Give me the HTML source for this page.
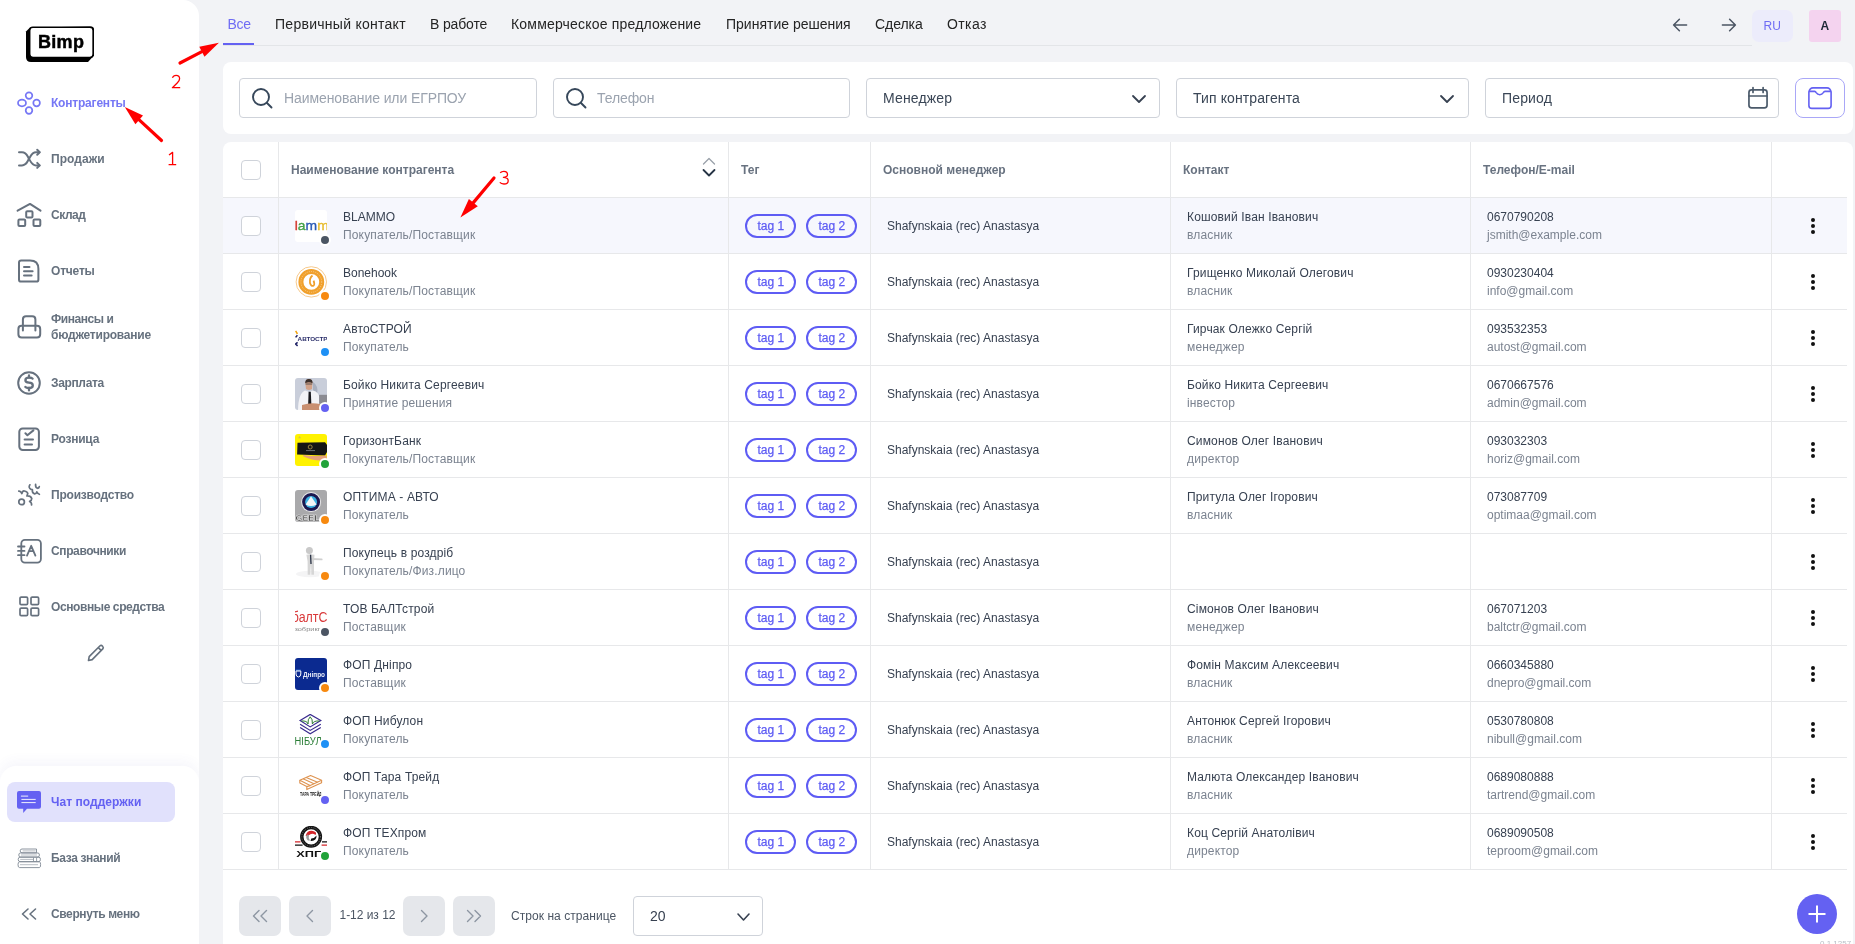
<!DOCTYPE html><html><head><meta charset="utf-8"><title>Bimp</title><style>
*{box-sizing:border-box;margin:0;padding:0}
html,body{width:1855px;height:944px;overflow:hidden}
body{background:#f2f3f6;font-family:"Liberation Sans",sans-serif;position:relative;-webkit-font-smoothing:antialiased}
.t{position:absolute;white-space:nowrap;line-height:1}
.a{position:absolute}
svg{position:absolute;overflow:visible}
</style></head><body><div class="a" style="left:0;top:0;width:1855px;height:944px;overflow:hidden;will-change:transform">
<div class="a" style="left:0;top:0;width:199px;height:944px;background:#fff;border-top-right-radius:16px"></div>
<svg style="left:26px;top:26px" width="68" height="36" viewBox="0 0 68 36">
<path d="M4 1.5 L65 0.6 Q68 0.6 68 3.6 L68 29.6 L62 36 L5 36 Q0 36 0 31 L0 5.5 Z" fill="#000"/>
<rect x="3.7" y="1.3" width="63.4" height="30.2" rx="3.2" fill="#fff" stroke="#000" stroke-width="1.5"/>
</svg>
<div class="t" style="left:38px;top:32.76px;font-size:18px;font-weight:700;color:#000;letter-spacing:0.3px;-webkit-text-stroke:0.45px #000">Bimp</div>
<svg style="left:17px;top:91px" width="24" height="24" viewBox="0 0 24 24" fill="none" stroke="#7677f5" stroke-width="1.7" stroke-linecap="round" stroke-linejoin="round"><circle cx="12" cy="4.6" r="3.3"/><ellipse cx="5" cy="12" rx="4" ry="3.3"/><circle cx="19.6" cy="12" r="3.3"/><circle cx="12" cy="19.5" r="3.3"/></svg>
<div class="t" style="left:51px;top:97.14px;font-size:12px;font-weight:700;color:#7677f5;letter-spacing:-0.2px">Контрагенты</div>
<svg style="left:17px;top:147px" width="24" height="24" viewBox="0 0 24 24" fill="none" stroke="#66717e" stroke-width="2" stroke-linecap="round" stroke-linejoin="round"><path d="M2 5.3 H5 C9.5 5.3 10 8.5 12 11.8 C14 15.2 15 18.4 19 18.4 H22.5"/><path d="M2 18.4 H5 C9.5 18.4 10 15.2 12 11.8 C14 8.5 15 5.3 19 5.3 H22.5"/><path d="M20.2 2.8 L22.7 5.3 L20.2 7.8"/><path d="M20.2 15.9 L22.7 18.4 L20.2 20.9"/></svg>
<div class="t" style="left:51px;top:153.14px;font-size:12px;font-weight:700;color:#66717e;letter-spacing:0.05px">Продажи</div>
<svg style="left:17px;top:203px" width="24" height="24" viewBox="0 0 24 24" fill="none" stroke="#66717e" stroke-width="2" stroke-linecap="round" stroke-linejoin="round"><path d="M0.6 7.7 L13 0.9 L23.5 7.7"/><rect x="9.2" y="8.2" width="6.3" height="6.4" rx="1"/><rect x="1.4" y="16.4" width="6.8" height="6.6" rx="1"/><rect x="16.5" y="16.4" width="6.8" height="6.6" rx="1"/></svg>
<div class="t" style="left:51px;top:209.14px;font-size:12px;font-weight:700;color:#66717e;letter-spacing:-0.45px">Склад</div>
<svg style="left:17px;top:259px" width="24" height="24" viewBox="0 0 24 24" fill="none" stroke="#66717e" stroke-width="2" stroke-linecap="round" stroke-linejoin="round"><path d="M2 3.5 Q2 1.4 4.2 1.4 H13 Q21.4 1.4 21.4 9.8 V20.4 Q21.4 22.6 19.3 22.6 H4.2 Q2 22.6 2 20.4 Z"/><path d="M7 7.9 H12.5"/><path d="M7 12.3 H15.6"/><path d="M7 16.6 H14.6"/></svg>
<div class="t" style="left:51px;top:265.14px;font-size:12px;font-weight:700;color:#66717e;letter-spacing:-0.2px">Отчеты</div>
<svg style="left:17px;top:315px" width="24" height="24" viewBox="0 0 24 24" fill="none" stroke="#66717e" stroke-width="2" stroke-linecap="round" stroke-linejoin="round"><path d="M1.4 14 Q1.4 10.8 4.6 10.8 H20 Q23.2 10.8 23.2 14 V19.2 Q23.2 22.4 20 22.4 H4.6 Q1.4 22.4 1.4 19.2 Z"/><path d="M5.9 15.6 V4.4 Q5.9 1.3 9 1.3 H15.2 Q18.4 1.3 18.4 4.4 V15.6"/></svg>
<div class="t" style="left:51px;top:313.34px;font-size:12px;font-weight:700;color:#66717e;letter-spacing:-0.45px">Финансы и</div>
<div class="t" style="left:51px;top:328.84px;font-size:12px;font-weight:700;color:#66717e;letter-spacing:-0.23px">бюджетирование</div>
<svg style="left:17px;top:371px" width="24" height="24" viewBox="0 0 24 24" fill="none" stroke="#66717e" stroke-width="2" stroke-linecap="round" stroke-linejoin="round"><circle cx="12" cy="12" r="10.8"/><path d="M15.6 7.6 Q14.8 6.6 12 6.6 Q8.4 6.6 8.4 9.2 Q8.4 11.4 12 11.6 Q15.8 11.8 15.8 14.4 Q15.8 17 12 17 Q9.2 17 8.4 16" stroke-width="2.3"/><path d="M12 4.4 V6.6 M12 17 V19.4" stroke-width="2.3"/></svg>
<div class="t" style="left:51px;top:377.14px;font-size:12px;font-weight:700;color:#66717e;letter-spacing:-0.35px">Зарплата</div>
<svg style="left:17px;top:427px" width="24" height="24" viewBox="0 0 24 24" fill="none" stroke="#66717e" stroke-width="2" stroke-linecap="round" stroke-linejoin="round"><rect x="2.3" y="1.4" width="19.6" height="21.6" rx="3.4"/><path d="M8.4 6.3 L10.4 8.2 L16.4 3.4"/><path d="M7.6 12.6 H16"/><path d="M7.6 17.5 H15"/></svg>
<div class="t" style="left:51px;top:433.14px;font-size:12px;font-weight:700;color:#66717e;letter-spacing:-0.22px">Розница</div>
<svg style="left:17px;top:483px" width="24" height="24" viewBox="0 0 24 24" fill="none" stroke="#66717e" stroke-width="2" stroke-linecap="round" stroke-linejoin="round"><circle cx="4.6" cy="18.9" r="2.8" stroke-width="1.7"/><path d="M1.8 8.1 Q3.6 7.8 4.9 10.6 Q5.6 7.6 7.4 8 Q10.6 8.8 10.8 10.6 Q9.8 12.6 9.9 13 Q13.6 12.6 14.8 15.6 Q14.8 17.6 12.6 18.4 Q14.8 19.4 14.6 22" stroke-width="1.7"/><path d="M12.9 1.8 Q10.9 4.6 14.2 6.5 L15.4 6.6 Q14.8 9.4 17.3 10.8 Q19.4 11 19.8 8.8 Q20.6 10.8 22.4 11.3" stroke-width="1.7"/><path d="M18.6 1.4 Q18.2 4.6 20.6 5.3 Q22.1 5.2 22.3 3.7" stroke-width="1.7"/></svg>
<div class="t" style="left:51px;top:489.14px;font-size:12px;font-weight:700;color:#66717e;letter-spacing:-0.22px">Производство</div>
<svg style="left:17px;top:539px" width="24" height="24" viewBox="0 0 24 24" fill="none" stroke="#66717e" stroke-width="2" stroke-linecap="round" stroke-linejoin="round"><rect x="4.3" y="0.9" width="19.6" height="22.7" rx="3.6" stroke-width="1.8"/><path d="M1 7.5 H7.5 M1 11.9 H7.5 M1 16.2 H7.5" stroke-width="1.8"/><path d="M10 16.6 L14.2 6.8 L18.4 16.6 M11.8 12.1 H16.6" stroke-width="1.8"/></svg>
<div class="t" style="left:51px;top:545.14px;font-size:12px;font-weight:700;color:#66717e;letter-spacing:-0.38px">Справочники</div>
<svg style="left:17px;top:595px" width="24" height="24" viewBox="0 0 24 24" fill="none" stroke="#66717e" stroke-width="2" stroke-linecap="round" stroke-linejoin="round"><rect x="3" y="2.1" width="7.6" height="7.6" rx="1.2" stroke-width="1.7"/><rect x="14" y="2.1" width="7.6" height="7.6" rx="1.2" stroke-width="1.7"/><rect x="3" y="13.1" width="7.6" height="7.6" rx="1.2" stroke-width="1.7"/><rect x="14" y="13.1" width="7.6" height="7.6" rx="1.2" stroke-width="1.7"/></svg>
<div class="t" style="left:51px;top:601.14px;font-size:12px;font-weight:700;color:#66717e;letter-spacing:-0.4px">Основные средства</div>
<svg style="left:87px;top:644px" width="18" height="18" viewBox="0 0 18 18" fill="none" stroke="#66717e" stroke-width="1.6" stroke-linejoin="round"><path d="M1.5 16.5 L2.2 12.6 L12.8 2 Q14.2 0.8 15.6 2.2 Q16.9 3.6 15.8 4.9 L5.2 15.6 Z"/><path d="M11.3 3.6 L14.3 6.6"/></svg>
<div class="a" style="left:0;top:700px;width:199px;height:244px;overflow:hidden"><div class="a" style="left:0;top:66px;width:199px;height:200px;background:#fff;border-radius:16px 16px 0 0;box-shadow:0 -5px 12px rgba(80,80,170,0.05)"></div></div>
<div class="a" style="left:7px;top:782px;width:168px;height:40px;background:#e1e1fc;border-radius:8px"></div>
<svg style="left:17px;top:790px" width="24" height="23" viewBox="0 0 24 23"><path d="M2 1 H22 Q24 1 24 3 V16.7 Q24 18.7 22 18.7 H10 L6.2 22.9 V18.7 H2 Q0 18.7 0 16.7 V3 Q0 1 2 1 Z" fill="#6461f2"/><path d="M4.3 6.1 H10.8 M4.8 9.4 H18.3 M4.8 12.6 H18.3" stroke="#fff" stroke-width="1" stroke-linecap="round" opacity="0.9"/></svg>
<div class="t" style="left:51px;top:795.84px;font-size:12px;font-weight:700;color:#6461f2;letter-spacing:0.05px">Чат поддержки</div>
<svg style="left:17px;top:848px" width="24" height="21" viewBox="0 0 24 21" fill="none" stroke="#7f8994" stroke-width="0.9" stroke-linejoin="round"><path d="M5 1 H19.5 V4.8 H5 Q3.2 4.8 3.2 2.9 Q3.2 1 5 1 Z"/><path d="M3.4 5 H21 Q22.4 5 22.4 7 Q22.4 9 21 9 H3.4 Q1.8 9 1.8 7 Q1.8 5 3.4 5 Z"/><path d="M3 9.2 H22 Q23.4 9.2 23.4 11.4 Q23.4 13.6 22 13.6 H3 Q1.2 13.6 1.2 11.4 Q1.2 9.2 3 9.2 Z"/><path d="M2.6 13.8 H22.4 Q23.6 13.8 23.6 16.6 Q23.6 19.6 22.4 19.6 H2.6 Q1 19.6 1 16.7 Q1 13.8 2.6 13.8 Z"/><path d="M5.6 2.9 H18.6 M4 7 H20 M3.2 11.4 H16 M3 16.7 H21" stroke-width="0.7" opacity="0.8"/><path d="M16.5 9.6 V13.2 M19.6 9.6 V13.2" stroke-width="0.8"/></svg>
<div class="t" style="left:51px;top:851.84px;font-size:12px;font-weight:700;color:#66717e;letter-spacing:-0.35px">База знаний</div>
<svg style="left:21px;top:908px" width="16" height="12" viewBox="0 0 16 12" fill="none" stroke="#66717e" stroke-width="1.6" stroke-linecap="round" stroke-linejoin="round"><path d="M7 1 L1.5 6 L7 11"/><path d="M14.5 1 L9 6 L14.5 11"/></svg>
<div class="t" style="left:51px;top:907.84px;font-size:12px;font-weight:700;color:#66717e;letter-spacing:-0.38px">Свернуть меню</div>
<div class="a" style="left:223px;top:45px;width:1529px;height:1px;background:#e3e5e8"></div>
<div class="a" style="left:223px;top:43px;width:31px;height:2px;background:#6461f2"></div>
<div class="t" style="left:227.5px;top:17.45px;font-size:14px;font-weight:400;color:#6f6cf4;letter-spacing:-0.25px">Все</div>
<div class="t" style="left:275px;top:17.45px;font-size:14px;font-weight:400;color:#242424;letter-spacing:0.27px">Первичный контакт</div>
<div class="t" style="left:430px;top:17.45px;font-size:14px;font-weight:400;color:#242424;letter-spacing:-0.15px">В работе</div>
<div class="t" style="left:511px;top:17.45px;font-size:14px;font-weight:400;color:#242424;letter-spacing:0.19px">Коммерческое предложение</div>
<div class="t" style="left:726px;top:17.45px;font-size:14px;font-weight:400;color:#242424;letter-spacing:0.0px">Принятие решения</div>
<div class="t" style="left:875px;top:17.45px;font-size:14px;font-weight:400;color:#242424;letter-spacing:-0.05px">Сделка</div>
<div class="t" style="left:947px;top:17.45px;font-size:14px;font-weight:400;color:#242424;letter-spacing:0.4px">Отказ</div>
<svg style="left:1672px;top:18px" width="16" height="14" viewBox="0 0 16 14" fill="none" stroke="#4b5563" stroke-width="1.5" stroke-linecap="round" stroke-linejoin="round"><path d="M14.6 7 H1.6 M7.4 1.3 L1.6 7 L7.4 12.7"/></svg>
<svg style="left:1721px;top:18px" width="16" height="14" viewBox="0 0 16 14" fill="none" stroke="#4b5563" stroke-width="1.5" stroke-linecap="round" stroke-linejoin="round"><path d="M1.4 7 H14.4 M8.6 1.3 L14.4 7 L8.6 12.7"/></svg>
<div class="a" style="left:1752px;top:10px;width:41px;height:32px;background:#ececfb;border-radius:7px"></div>
<div class="t" style="left:1763.5px;top:20.34px;font-size:12px;font-weight:400;color:#6f6cf4;">RU</div>
<div class="a" style="left:1809px;top:10px;width:32px;height:32px;background:#f4d3ef;border-radius:3px"></div>
<div class="t" style="left:1820.5px;top:20.34px;font-size:12px;font-weight:700;color:#1f2937;">A</div>
<div class="a" style="left:223px;top:62px;width:1630px;height:72px;background:#fff;border-radius:8px"></div>
<div class="a" style="left:239px;top:78px;width:298px;height:40px;border:1px solid #cfd3da;border-radius:4px"></div>
<div class="a" style="left:553px;top:78px;width:297px;height:40px;border:1px solid #cfd3da;border-radius:4px"></div>
<div class="a" style="left:866px;top:78px;width:294px;height:40px;border:1px solid #cfd3da;border-radius:4px"></div>
<div class="a" style="left:1176px;top:78px;width:293px;height:40px;border:1px solid #cfd3da;border-radius:4px"></div>
<div class="a" style="left:1485px;top:78px;width:294px;height:40px;border:1px solid #cfd3da;border-radius:4px"></div>
<svg style="left:252px;top:88px" width="22" height="22" viewBox="0 0 22 22" fill="none" stroke="#36475a" stroke-width="1.9" stroke-linecap="round"><circle cx="9" cy="9" r="8"/><path d="M15 15 L19.5 19.5"/></svg>
<svg style="left:566px;top:88px" width="22" height="22" viewBox="0 0 22 22" fill="none" stroke="#36475a" stroke-width="1.9" stroke-linecap="round"><circle cx="9" cy="9" r="8"/><path d="M15 15 L19.5 19.5"/></svg>
<div class="t" style="left:284px;top:90.75px;font-size:14px;font-weight:400;color:#9ba3af;letter-spacing:-0.1px">Наименование или ЕГРПОУ</div>
<div class="t" style="left:597px;top:90.75px;font-size:14px;font-weight:400;color:#9ba3af;letter-spacing:-0.1px">Телефон</div>
<div class="t" style="left:883px;top:90.75px;font-size:14px;font-weight:400;color:#3a4656;;letter-spacing:0.15px">Менеджер</div>
<div class="t" style="left:1193px;top:90.75px;font-size:14px;font-weight:400;color:#3a4656;letter-spacing:0.1px">Тип контрагента</div>
<div class="t" style="left:1502px;top:90.75px;font-size:14px;font-weight:400;color:#3a4656;;letter-spacing:0.15px">Период</div>
<svg style="left:1132px;top:95px" width="14" height="8" viewBox="0 0 14 8" fill="none" stroke="#374151" stroke-width="1.8" stroke-linecap="round" stroke-linejoin="round"><path d="M1 1 L7.0 7 L13 1"/></svg>
<svg style="left:1440px;top:95px" width="14" height="8" viewBox="0 0 14 8" fill="none" stroke="#374151" stroke-width="1.8" stroke-linecap="round" stroke-linejoin="round"><path d="M1 1 L7.0 7 L13 1"/></svg>
<svg style="left:1748px;top:87px" width="20" height="22" viewBox="0 0 20 22" fill="none" stroke="#4b5a6a" stroke-width="1.7" stroke-linecap="round"><rect x="0.95" y="2.95" width="18.1" height="17.9" rx="2.6"/><path d="M0.95 9 H19 M5 0.6 V5.4 M15.1 0.6 V5.4"/></svg>
<div class="a" style="left:1795px;top:78px;width:50px;height:40px;border:1px solid #a9a7f7;border-radius:8px"></div>
<svg style="left:1808px;top:87px" width="24" height="22" viewBox="0 0 24 22" fill="none" stroke="#6461f2" stroke-width="1.6" stroke-linejoin="round"><path d="M0.9 5 Q1.8 0.9 5 0.9 H19 Q22.2 0.9 23.1 5 V18.4 Q23.1 21.4 20.1 21.4 H3.9 Q0.9 21.4 0.9 18.4 Z"/><path d="M0.9 4.4 H6.6 Q7.6 4.4 8.2 5.6 Q9.5 7.7 11.8 7.7 Q14 7.7 15.3 5.6 Q16 4.4 17 4.4 H23.1"/></svg>
<div class="a" style="left:223px;top:142px;width:1630px;height:810px;background:#fff;border-radius:8px"></div>
<div class="a" style="left:223px;top:198px;width:1624px;height:55px;background:#f6f7fd"></div>
<div class="a" style="left:223px;top:197px;width:1624px;height:1px;background:#e7e8ea"></div>
<div class="a" style="left:223px;top:253px;width:1624px;height:1px;background:#e7e8ea"></div>
<div class="a" style="left:223px;top:309px;width:1624px;height:1px;background:#e7e8ea"></div>
<div class="a" style="left:223px;top:365px;width:1624px;height:1px;background:#e7e8ea"></div>
<div class="a" style="left:223px;top:421px;width:1624px;height:1px;background:#e7e8ea"></div>
<div class="a" style="left:223px;top:477px;width:1624px;height:1px;background:#e7e8ea"></div>
<div class="a" style="left:223px;top:533px;width:1624px;height:1px;background:#e7e8ea"></div>
<div class="a" style="left:223px;top:589px;width:1624px;height:1px;background:#e7e8ea"></div>
<div class="a" style="left:223px;top:645px;width:1624px;height:1px;background:#e7e8ea"></div>
<div class="a" style="left:223px;top:701px;width:1624px;height:1px;background:#e7e8ea"></div>
<div class="a" style="left:223px;top:757px;width:1624px;height:1px;background:#e7e8ea"></div>
<div class="a" style="left:223px;top:813px;width:1624px;height:1px;background:#e7e8ea"></div>
<div class="a" style="left:223px;top:869px;width:1624px;height:1px;background:#e7e8ea"></div>
<div class="a" style="left:278px;top:142px;width:1px;height:728px;background:#e7e8ea"></div>
<div class="a" style="left:728px;top:142px;width:1px;height:728px;background:#e7e8ea"></div>
<div class="a" style="left:870px;top:142px;width:1px;height:728px;background:#e7e8ea"></div>
<div class="a" style="left:1170px;top:142px;width:1px;height:728px;background:#e7e8ea"></div>
<div class="a" style="left:1470px;top:142px;width:1px;height:728px;background:#e7e8ea"></div>
<div class="a" style="left:1771px;top:142px;width:1px;height:728px;background:#e7e8ea"></div>
<div class="a" style="left:241px;top:160px;width:20px;height:20px;border:1px solid #cfd3da;border-radius:4px;background:#fff"></div>
<div class="t" style="left:291px;top:163.84px;font-size:12px;font-weight:700;color:#687280;">Наименование контрагента</div>
<div class="t" style="left:741px;top:163.84px;font-size:12px;font-weight:700;color:#687280;">Тег</div>
<div class="t" style="left:883px;top:163.84px;font-size:12px;font-weight:700;color:#687280;">Основной менеджер</div>
<div class="t" style="left:1183px;top:163.84px;font-size:12px;font-weight:700;color:#687280;">Контакт</div>
<div class="t" style="left:1483px;top:163.84px;font-size:12px;font-weight:700;color:#687280;">Телефон/E-mail</div>
<svg style="left:702px;top:157px" width="14" height="20" viewBox="0 0 14 20" fill="none" stroke-linecap="round" stroke-linejoin="round"><path d="M1.5 7 L7 1.5 L12.5 7" stroke="#9aa1aa" stroke-width="1.3"/><path d="M1.5 13 L7 18.5 L12.5 13" stroke="#263445" stroke-width="1.8"/></svg>
<div class="a" style="left:241px;top:216px;width:20px;height:20px;border:1px solid #cfd3da;border-radius:4px;background:#fff"></div>
<svg style="left:295px;top:210px" width="32" height="32" viewBox="0 0 32 32"><defs><clipPath id="cblammo"><rect width="32" height="32" rx="3"/></clipPath></defs><g clip-path="url(#cblammo)"><rect width="32" height="32" fill="#fff"/><text x="-0.2" y="20.2" font-family="Liberation Sans" font-size="13" font-weight="400" stroke-width="0.35" textLength="34" lengthAdjust="spacingAndGlyphs"><tspan fill="#d2392f" stroke="#d2392f">l</tspan><tspan fill="#43a047" stroke="#43a047">a</tspan><tspan fill="#2c5bb5" stroke="#2c5bb5">m</tspan><tspan fill="#e6bb2c" stroke="#e6bb2c">m</tspan></text></g></svg>
<div class="a" style="left:319px;top:234px;width:12px;height:12px;border-radius:50%;background:#4b5563;border:2px solid #fff"></div>
<div class="t" style="left:343px;top:210.84px;font-size:12px;font-weight:400;color:#374151;">BLAMMO</div>
<div class="t" style="left:343px;top:228.84px;font-size:12px;font-weight:400;color:#7b8390;;letter-spacing:0.15px">Покупатель/Поставщик</div>
<div class="a" style="left:745px;top:214px;width:51px;height:24px;border:2px solid #5e5cf4;border-radius:12px"></div>
<div class="t" style="left:757.5px;top:220.34px;font-size:12px;font-weight:400;color:#5e5cf4;-webkit-text-stroke:0.25px #5e5cf4">tag 1</div>
<div class="a" style="left:806px;top:214px;width:51px;height:24px;border:2px solid #5e5cf4;border-radius:12px"></div>
<div class="t" style="left:818.5px;top:220.34px;font-size:12px;font-weight:400;color:#5e5cf4;-webkit-text-stroke:0.25px #5e5cf4">tag 2</div>
<div class="t" style="left:887px;top:219.84px;font-size:12px;font-weight:400;color:#374151;">Shafynskaia (rec) Anastasya</div>
<div class="t" style="left:1187px;top:210.84px;font-size:12px;font-weight:400;color:#374151;;letter-spacing:0.15px">Кошовий Іван Іванович</div>
<div class="t" style="left:1187px;top:228.84px;font-size:12px;font-weight:400;color:#7b8390;;letter-spacing:0.15px">власник</div>
<div class="t" style="left:1487px;top:210.84px;font-size:12px;font-weight:400;color:#374151;">0670790208</div>
<div class="t" style="left:1487px;top:228.84px;font-size:12px;font-weight:400;color:#7b8390;">jsmith@example.com</div>
<div class="a" style="left:1811px;top:218px;width:4.4px;height:4.4px;border-radius:50%;background:#111"></div>
<div class="a" style="left:1811px;top:224px;width:4.4px;height:4.4px;border-radius:50%;background:#111"></div>
<div class="a" style="left:1811px;top:230px;width:4.4px;height:4.4px;border-radius:50%;background:#111"></div>
<div class="a" style="left:241px;top:272px;width:20px;height:20px;border:1px solid #cfd3da;border-radius:4px;background:#fff"></div>
<svg style="left:295px;top:266px" width="32" height="32" viewBox="0 0 32 32"><defs><clipPath id="cbone"><rect width="32" height="32" rx="3"/></clipPath></defs><g clip-path="url(#cbone)"><rect width="32" height="32" fill="#fff"/><circle cx="16.3" cy="15.9" r="15.2" fill="none" stroke="#f6c98c" stroke-width="1"/><circle cx="16.3" cy="15.9" r="10.4" fill="none" stroke="#f0a02c" stroke-width="5"/><circle cx="16.3" cy="15.9" r="10.4" fill="none" stroke="#fbe3bf" stroke-width="0.6" stroke-dasharray="1 1.2"/><path d="M17.5 9.5 Q14.3 12 15 17 Q16 20.5 18.6 19.6 Q20 18.5 18.6 14.6" stroke="#f0a02c" stroke-width="1.8" fill="none"/></g></svg>
<div class="a" style="left:319px;top:290px;width:12px;height:12px;border-radius:50%;background:#f7890f;border:2px solid #fff"></div>
<div class="t" style="left:343px;top:266.84px;font-size:12px;font-weight:400;color:#374151;">Bonehook</div>
<div class="t" style="left:343px;top:284.84px;font-size:12px;font-weight:400;color:#7b8390;;letter-spacing:0.15px">Покупатель/Поставщик</div>
<div class="a" style="left:745px;top:270px;width:51px;height:24px;border:2px solid #5e5cf4;border-radius:12px"></div>
<div class="t" style="left:757.5px;top:276.34px;font-size:12px;font-weight:400;color:#5e5cf4;-webkit-text-stroke:0.25px #5e5cf4">tag 1</div>
<div class="a" style="left:806px;top:270px;width:51px;height:24px;border:2px solid #5e5cf4;border-radius:12px"></div>
<div class="t" style="left:818.5px;top:276.34px;font-size:12px;font-weight:400;color:#5e5cf4;-webkit-text-stroke:0.25px #5e5cf4">tag 2</div>
<div class="t" style="left:887px;top:275.84px;font-size:12px;font-weight:400;color:#374151;">Shafynskaia (rec) Anastasya</div>
<div class="t" style="left:1187px;top:266.84px;font-size:12px;font-weight:400;color:#374151;;letter-spacing:0.15px">Грищенко Миколай Олегович</div>
<div class="t" style="left:1187px;top:284.84px;font-size:12px;font-weight:400;color:#7b8390;;letter-spacing:0.15px">власник</div>
<div class="t" style="left:1487px;top:266.84px;font-size:12px;font-weight:400;color:#374151;">0930230404</div>
<div class="t" style="left:1487px;top:284.84px;font-size:12px;font-weight:400;color:#7b8390;">info@gmail.com</div>
<div class="a" style="left:1811px;top:274px;width:4.4px;height:4.4px;border-radius:50%;background:#111"></div>
<div class="a" style="left:1811px;top:280px;width:4.4px;height:4.4px;border-radius:50%;background:#111"></div>
<div class="a" style="left:1811px;top:286px;width:4.4px;height:4.4px;border-radius:50%;background:#111"></div>
<div class="a" style="left:241px;top:328px;width:20px;height:20px;border:1px solid #cfd3da;border-radius:4px;background:#fff"></div>
<svg style="left:295px;top:322px" width="32" height="32" viewBox="0 0 32 32"><defs><clipPath id="cavto"><rect width="32" height="32" rx="3"/></clipPath></defs><g clip-path="url(#cavto)"><rect width="32" height="32" fill="#fff"/><path d="M0.6 8.8 L2.4 11.8" stroke="#f2a20a" stroke-width="1.6"/><path d="M2.4 13.2 L0.6 15.4" stroke="#1f2266" stroke-width="1.5"/><path d="M2.6 20.4 L0.6 22 L2.6 23.8" stroke="#1f2266" stroke-width="1.6" fill="none"/><text x="2.6" y="18.9" font-family="Liberation Sans" font-size="6" font-weight="700" fill="#2a2e6a" textLength="30" lengthAdjust="spacingAndGlyphs">АВТОСТР</text></g></svg>
<div class="a" style="left:319px;top:346px;width:12px;height:12px;border-radius:50%;background:#1e90f5;border:2px solid #fff"></div>
<div class="t" style="left:343px;top:322.84px;font-size:12px;font-weight:400;color:#374151;;letter-spacing:0.15px">АвтоСТРОЙ</div>
<div class="t" style="left:343px;top:340.84px;font-size:12px;font-weight:400;color:#7b8390;;letter-spacing:0.15px">Покупатель</div>
<div class="a" style="left:745px;top:326px;width:51px;height:24px;border:2px solid #5e5cf4;border-radius:12px"></div>
<div class="t" style="left:757.5px;top:332.34px;font-size:12px;font-weight:400;color:#5e5cf4;-webkit-text-stroke:0.25px #5e5cf4">tag 1</div>
<div class="a" style="left:806px;top:326px;width:51px;height:24px;border:2px solid #5e5cf4;border-radius:12px"></div>
<div class="t" style="left:818.5px;top:332.34px;font-size:12px;font-weight:400;color:#5e5cf4;-webkit-text-stroke:0.25px #5e5cf4">tag 2</div>
<div class="t" style="left:887px;top:331.84px;font-size:12px;font-weight:400;color:#374151;">Shafynskaia (rec) Anastasya</div>
<div class="t" style="left:1187px;top:322.84px;font-size:12px;font-weight:400;color:#374151;;letter-spacing:0.15px">Гирчак Олежко Сергій</div>
<div class="t" style="left:1187px;top:340.84px;font-size:12px;font-weight:400;color:#7b8390;;letter-spacing:0.15px">менеджер</div>
<div class="t" style="left:1487px;top:322.84px;font-size:12px;font-weight:400;color:#374151;">093532353</div>
<div class="t" style="left:1487px;top:340.84px;font-size:12px;font-weight:400;color:#7b8390;">autost@gmail.com</div>
<div class="a" style="left:1811px;top:330px;width:4.4px;height:4.4px;border-radius:50%;background:#111"></div>
<div class="a" style="left:1811px;top:336px;width:4.4px;height:4.4px;border-radius:50%;background:#111"></div>
<div class="a" style="left:1811px;top:342px;width:4.4px;height:4.4px;border-radius:50%;background:#111"></div>
<div class="a" style="left:241px;top:384px;width:20px;height:20px;border:1px solid #cfd3da;border-radius:4px;background:#fff"></div>
<svg style="left:295px;top:378px" width="32" height="32" viewBox="0 0 32 32"><defs><clipPath id="cphoto"><rect width="32" height="32" rx="3"/></clipPath></defs><g clip-path="url(#cphoto)"><rect width="32" height="32" fill="#c9ceda"/><path d="M18 4 Q24 8 22 16 L18 16 Z" fill="#a9b0bf"/><path d="M10.4 5.6 Q10.6 1 14 1 Q17.6 1 17.4 5.6 L17 11 Q14 13 11 11 Z" fill="#d3a38a"/><path d="M10.2 5.2 Q10 0.8 14 0.9 Q17.8 0.9 17.6 5.2 Q14 3.2 10.2 5.2 Z" fill="#3b2f2a"/><path d="M10.6 6 H17.2" stroke="#444" stroke-width="0.8"/><path d="M3 32 Q3.4 15 10 12.4 L14 14 L18 12.4 Q24 14 24.5 20 L24.5 32 Z" fill="#f3f3f6"/><path d="M13.6 13.8 H15.8 L16.6 31.6 H13 Z" fill="#1a1a1e"/><rect x="24.1" y="16.8" width="7.9" height="9" fill="#8b8b92"/><path d="M7 27 Q16 24 25 26 L25 32 L7 32 Z" fill="#c98f70"/></g></svg>
<div class="a" style="left:319px;top:402px;width:12px;height:12px;border-radius:50%;background:#6461f2;border:2px solid #fff"></div>
<div class="t" style="left:343px;top:378.84px;font-size:12px;font-weight:400;color:#374151;;letter-spacing:0.15px">Бойко Никита Сергеевич</div>
<div class="t" style="left:343px;top:396.84px;font-size:12px;font-weight:400;color:#7b8390;;letter-spacing:0.15px">Принятие решения</div>
<div class="a" style="left:745px;top:382px;width:51px;height:24px;border:2px solid #5e5cf4;border-radius:12px"></div>
<div class="t" style="left:757.5px;top:388.34px;font-size:12px;font-weight:400;color:#5e5cf4;-webkit-text-stroke:0.25px #5e5cf4">tag 1</div>
<div class="a" style="left:806px;top:382px;width:51px;height:24px;border:2px solid #5e5cf4;border-radius:12px"></div>
<div class="t" style="left:818.5px;top:388.34px;font-size:12px;font-weight:400;color:#5e5cf4;-webkit-text-stroke:0.25px #5e5cf4">tag 2</div>
<div class="t" style="left:887px;top:387.84px;font-size:12px;font-weight:400;color:#374151;">Shafynskaia (rec) Anastasya</div>
<div class="t" style="left:1187px;top:378.84px;font-size:12px;font-weight:400;color:#374151;;letter-spacing:0.15px">Бойко Никита Сергеевич</div>
<div class="t" style="left:1187px;top:396.84px;font-size:12px;font-weight:400;color:#7b8390;;letter-spacing:0.15px">інвестор</div>
<div class="t" style="left:1487px;top:378.84px;font-size:12px;font-weight:400;color:#374151;">0670667576</div>
<div class="t" style="left:1487px;top:396.84px;font-size:12px;font-weight:400;color:#7b8390;">admin@gmail.com</div>
<div class="a" style="left:1811px;top:386px;width:4.4px;height:4.4px;border-radius:50%;background:#111"></div>
<div class="a" style="left:1811px;top:392px;width:4.4px;height:4.4px;border-radius:50%;background:#111"></div>
<div class="a" style="left:1811px;top:398px;width:4.4px;height:4.4px;border-radius:50%;background:#111"></div>
<div class="a" style="left:241px;top:440px;width:20px;height:20px;border:1px solid #cfd3da;border-radius:4px;background:#fff"></div>
<svg style="left:295px;top:434px" width="32" height="32" viewBox="0 0 32 32"><defs><clipPath id="cbank"><rect width="32" height="32" rx="3"/></clipPath></defs><g clip-path="url(#cbank)"><rect width="32" height="32" fill="#fff200"/><path d="M2.5 8.7 L30 8.3 L32 10.8 V18 L30 21.4 L2.1 20.6 Z" fill="#151515"/><path d="M6 8.5 Q8 7.4 10 8.5" fill="#c2655a"/><circle cx="15.2" cy="13" r="2" fill="none" stroke="#b89a4a" stroke-width="0.8"/><path d="M11 16.6 H20" stroke="#aaa" stroke-width="0.6"/><path d="M8 21 Q18 22.5 31.7 21.5 L31.7 26 Q20 28 8.5 22.5 Z" fill="#e6a07a"/><path d="M3 4.2 L4.6 2 L6.2 4.2 Z" fill="#d6c640"/></g></svg>
<div class="a" style="left:319px;top:458px;width:12px;height:12px;border-radius:50%;background:#22a33a;border:2px solid #fff"></div>
<div class="t" style="left:343px;top:434.84px;font-size:12px;font-weight:400;color:#374151;;letter-spacing:0.15px">ГоризонтБанк</div>
<div class="t" style="left:343px;top:452.84px;font-size:12px;font-weight:400;color:#7b8390;;letter-spacing:0.15px">Покупатель/Поставщик</div>
<div class="a" style="left:745px;top:438px;width:51px;height:24px;border:2px solid #5e5cf4;border-radius:12px"></div>
<div class="t" style="left:757.5px;top:444.34px;font-size:12px;font-weight:400;color:#5e5cf4;-webkit-text-stroke:0.25px #5e5cf4">tag 1</div>
<div class="a" style="left:806px;top:438px;width:51px;height:24px;border:2px solid #5e5cf4;border-radius:12px"></div>
<div class="t" style="left:818.5px;top:444.34px;font-size:12px;font-weight:400;color:#5e5cf4;-webkit-text-stroke:0.25px #5e5cf4">tag 2</div>
<div class="t" style="left:887px;top:443.84px;font-size:12px;font-weight:400;color:#374151;">Shafynskaia (rec) Anastasya</div>
<div class="t" style="left:1187px;top:434.84px;font-size:12px;font-weight:400;color:#374151;;letter-spacing:0.15px">Симонов Олег Іванович</div>
<div class="t" style="left:1187px;top:452.84px;font-size:12px;font-weight:400;color:#7b8390;;letter-spacing:0.15px">директор</div>
<div class="t" style="left:1487px;top:434.84px;font-size:12px;font-weight:400;color:#374151;">093032303</div>
<div class="t" style="left:1487px;top:452.84px;font-size:12px;font-weight:400;color:#7b8390;">horiz@gmail.com</div>
<div class="a" style="left:1811px;top:442px;width:4.4px;height:4.4px;border-radius:50%;background:#111"></div>
<div class="a" style="left:1811px;top:448px;width:4.4px;height:4.4px;border-radius:50%;background:#111"></div>
<div class="a" style="left:1811px;top:454px;width:4.4px;height:4.4px;border-radius:50%;background:#111"></div>
<div class="a" style="left:241px;top:496px;width:20px;height:20px;border:1px solid #cfd3da;border-radius:4px;background:#fff"></div>
<svg style="left:295px;top:490px" width="32" height="32" viewBox="0 0 32 32"><defs><clipPath id="cgeely"><rect width="32" height="32" rx="3"/></clipPath></defs><g clip-path="url(#cgeely)"><rect width="32" height="32" fill="#a9a9ab"/><circle cx="16.1" cy="12.1" r="10" fill="#e9e9ea"/><circle cx="16.1" cy="12.1" r="9" fill="#1c1850"/><circle cx="16.1" cy="12.1" r="6" fill="#3cb2e2"/><path d="M10.6 14.5 L16 6.2 L21.6 14.5 Q16 17.5 10.6 14.5 Z" fill="#f4f6f8"/><text x="0.6" y="30.6" font-family="Liberation Sans" font-size="8.4" font-weight="700" fill="#111" stroke="#f2f2f2" stroke-width="0.5" textLength="24" lengthAdjust="spacingAndGlyphs">GEEL</text></g></svg>
<div class="a" style="left:319px;top:514px;width:12px;height:12px;border-radius:50%;background:#f7890f;border:2px solid #fff"></div>
<div class="t" style="left:343px;top:490.84px;font-size:12px;font-weight:400;color:#374151;;letter-spacing:0.15px">ОПТИМА - АВТО</div>
<div class="t" style="left:343px;top:508.84px;font-size:12px;font-weight:400;color:#7b8390;;letter-spacing:0.15px">Покупатель</div>
<div class="a" style="left:745px;top:494px;width:51px;height:24px;border:2px solid #5e5cf4;border-radius:12px"></div>
<div class="t" style="left:757.5px;top:500.34px;font-size:12px;font-weight:400;color:#5e5cf4;-webkit-text-stroke:0.25px #5e5cf4">tag 1</div>
<div class="a" style="left:806px;top:494px;width:51px;height:24px;border:2px solid #5e5cf4;border-radius:12px"></div>
<div class="t" style="left:818.5px;top:500.34px;font-size:12px;font-weight:400;color:#5e5cf4;-webkit-text-stroke:0.25px #5e5cf4">tag 2</div>
<div class="t" style="left:887px;top:499.84px;font-size:12px;font-weight:400;color:#374151;">Shafynskaia (rec) Anastasya</div>
<div class="t" style="left:1187px;top:490.84px;font-size:12px;font-weight:400;color:#374151;;letter-spacing:0.15px">Притула Олег Ігорович</div>
<div class="t" style="left:1187px;top:508.84px;font-size:12px;font-weight:400;color:#7b8390;;letter-spacing:0.15px">власник</div>
<div class="t" style="left:1487px;top:490.84px;font-size:12px;font-weight:400;color:#374151;">073087709</div>
<div class="t" style="left:1487px;top:508.84px;font-size:12px;font-weight:400;color:#7b8390;">optimaa@gmail.com</div>
<div class="a" style="left:1811px;top:498px;width:4.4px;height:4.4px;border-radius:50%;background:#111"></div>
<div class="a" style="left:1811px;top:504px;width:4.4px;height:4.4px;border-radius:50%;background:#111"></div>
<div class="a" style="left:1811px;top:510px;width:4.4px;height:4.4px;border-radius:50%;background:#111"></div>
<div class="a" style="left:241px;top:552px;width:20px;height:20px;border:1px solid #cfd3da;border-radius:4px;background:#fff"></div>
<svg style="left:295px;top:546px" width="32" height="32" viewBox="0 0 32 32"><defs><clipPath id="cman"><rect width="32" height="32" rx="3"/></clipPath></defs><g clip-path="url(#cman)"><rect width="32" height="32" fill="#fff"/><ellipse cx="15" cy="28" rx="14" ry="3.2" fill="#f4f4f5"/><circle cx="14.4" cy="4.6" r="3.5" fill="#c9c9c9"/><path d="M11.4 8.7 Q14.5 8 19.5 8.7 L19 15.2 L19 28.8 L16.4 28.8 L16 17 L15.2 28.8 L12.7 28.8 L12.6 15.2 Z" fill="#d6d6d6"/><path d="M16 13 L26.7 13.4" stroke="#cfcfcf" stroke-width="1.8" stroke-linecap="round"/><path d="M15.6 8.7 L16 18" stroke="#2a3346" stroke-width="1.3"/></g></svg>
<div class="a" style="left:319px;top:570px;width:12px;height:12px;border-radius:50%;background:#f7890f;border:2px solid #fff"></div>
<div class="t" style="left:343px;top:546.84px;font-size:12px;font-weight:400;color:#374151;;letter-spacing:0.15px">Покупець в роздріб</div>
<div class="t" style="left:343px;top:564.84px;font-size:12px;font-weight:400;color:#7b8390;;letter-spacing:0.15px">Покупатель/Физ.лицо</div>
<div class="a" style="left:745px;top:550px;width:51px;height:24px;border:2px solid #5e5cf4;border-radius:12px"></div>
<div class="t" style="left:757.5px;top:556.34px;font-size:12px;font-weight:400;color:#5e5cf4;-webkit-text-stroke:0.25px #5e5cf4">tag 1</div>
<div class="a" style="left:806px;top:550px;width:51px;height:24px;border:2px solid #5e5cf4;border-radius:12px"></div>
<div class="t" style="left:818.5px;top:556.34px;font-size:12px;font-weight:400;color:#5e5cf4;-webkit-text-stroke:0.25px #5e5cf4">tag 2</div>
<div class="t" style="left:887px;top:555.84px;font-size:12px;font-weight:400;color:#374151;">Shafynskaia (rec) Anastasya</div>
<div class="a" style="left:1811px;top:554px;width:4.4px;height:4.4px;border-radius:50%;background:#111"></div>
<div class="a" style="left:1811px;top:560px;width:4.4px;height:4.4px;border-radius:50%;background:#111"></div>
<div class="a" style="left:1811px;top:566px;width:4.4px;height:4.4px;border-radius:50%;background:#111"></div>
<div class="a" style="left:241px;top:608px;width:20px;height:20px;border:1px solid #cfd3da;border-radius:4px;background:#fff"></div>
<svg style="left:295px;top:602px" width="32" height="32" viewBox="0 0 32 32"><defs><clipPath id="cbalt"><rect width="32" height="32" rx="3"/></clipPath></defs><g clip-path="url(#cbalt)"><rect width="32" height="32" fill="#fff"/><text x="-3.2" y="20.2" font-family="Liberation Sans" font-size="14" fill="#d9393a" textLength="35.6" lengthAdjust="spacingAndGlyphs">балтС</text><text x="-0.6" y="28.6" font-family="Liberation Sans" font-size="6.2" fill="#8a8a8a" textLength="26" lengthAdjust="spacingAndGlyphs">зобрикг</text></g></svg>
<div class="a" style="left:319px;top:626px;width:12px;height:12px;border-radius:50%;background:#4b5563;border:2px solid #fff"></div>
<div class="t" style="left:343px;top:602.84px;font-size:12px;font-weight:400;color:#374151;;letter-spacing:0.15px">ТОВ БАЛТстрой</div>
<div class="t" style="left:343px;top:620.84px;font-size:12px;font-weight:400;color:#7b8390;;letter-spacing:0.15px">Поставщик</div>
<div class="a" style="left:745px;top:606px;width:51px;height:24px;border:2px solid #5e5cf4;border-radius:12px"></div>
<div class="t" style="left:757.5px;top:612.34px;font-size:12px;font-weight:400;color:#5e5cf4;-webkit-text-stroke:0.25px #5e5cf4">tag 1</div>
<div class="a" style="left:806px;top:606px;width:51px;height:24px;border:2px solid #5e5cf4;border-radius:12px"></div>
<div class="t" style="left:818.5px;top:612.34px;font-size:12px;font-weight:400;color:#5e5cf4;-webkit-text-stroke:0.25px #5e5cf4">tag 2</div>
<div class="t" style="left:887px;top:611.84px;font-size:12px;font-weight:400;color:#374151;">Shafynskaia (rec) Anastasya</div>
<div class="t" style="left:1187px;top:602.84px;font-size:12px;font-weight:400;color:#374151;;letter-spacing:0.15px">Сімонов Олег Іванович</div>
<div class="t" style="left:1187px;top:620.84px;font-size:12px;font-weight:400;color:#7b8390;;letter-spacing:0.15px">менеджер</div>
<div class="t" style="left:1487px;top:602.84px;font-size:12px;font-weight:400;color:#374151;">067071203</div>
<div class="t" style="left:1487px;top:620.84px;font-size:12px;font-weight:400;color:#7b8390;">baltctr@gmail.com</div>
<div class="a" style="left:1811px;top:610px;width:4.4px;height:4.4px;border-radius:50%;background:#111"></div>
<div class="a" style="left:1811px;top:616px;width:4.4px;height:4.4px;border-radius:50%;background:#111"></div>
<div class="a" style="left:1811px;top:622px;width:4.4px;height:4.4px;border-radius:50%;background:#111"></div>
<div class="a" style="left:241px;top:664px;width:20px;height:20px;border:1px solid #cfd3da;border-radius:4px;background:#fff"></div>
<svg style="left:295px;top:658px" width="32" height="32" viewBox="0 0 32 32"><defs><clipPath id="cdnipro"><rect width="32" height="32" rx="3"/></clipPath></defs><g clip-path="url(#cdnipro)"><rect width="32" height="32" fill="#0b2a90"/><path d="M0.8 12.2 H5.8" stroke="#59a8ff" stroke-width="0.8"/><path d="M1 13 H5.8 V16 Q5.8 18.6 3.4 19 Q1 18.6 1 16 Z" fill="none" stroke="#fff" stroke-width="1"/><text x="8" y="18.9" font-family="Liberation Sans" font-size="8" font-weight="700" fill="#e8ecf8" textLength="22" lengthAdjust="spacingAndGlyphs">Дніпро</text></g></svg>
<div class="a" style="left:319px;top:682px;width:12px;height:12px;border-radius:50%;background:#f7890f;border:2px solid #fff"></div>
<div class="t" style="left:343px;top:658.84px;font-size:12px;font-weight:400;color:#374151;;letter-spacing:0.15px">ФОП Дніпро</div>
<div class="t" style="left:343px;top:676.84px;font-size:12px;font-weight:400;color:#7b8390;;letter-spacing:0.15px">Поставщик</div>
<div class="a" style="left:745px;top:662px;width:51px;height:24px;border:2px solid #5e5cf4;border-radius:12px"></div>
<div class="t" style="left:757.5px;top:668.34px;font-size:12px;font-weight:400;color:#5e5cf4;-webkit-text-stroke:0.25px #5e5cf4">tag 1</div>
<div class="a" style="left:806px;top:662px;width:51px;height:24px;border:2px solid #5e5cf4;border-radius:12px"></div>
<div class="t" style="left:818.5px;top:668.34px;font-size:12px;font-weight:400;color:#5e5cf4;-webkit-text-stroke:0.25px #5e5cf4">tag 2</div>
<div class="t" style="left:887px;top:667.84px;font-size:12px;font-weight:400;color:#374151;">Shafynskaia (rec) Anastasya</div>
<div class="t" style="left:1187px;top:658.84px;font-size:12px;font-weight:400;color:#374151;;letter-spacing:0.15px">Фомін Максим Алексеевич</div>
<div class="t" style="left:1187px;top:676.84px;font-size:12px;font-weight:400;color:#7b8390;;letter-spacing:0.15px">власник</div>
<div class="t" style="left:1487px;top:658.84px;font-size:12px;font-weight:400;color:#374151;">0660345880</div>
<div class="t" style="left:1487px;top:676.84px;font-size:12px;font-weight:400;color:#7b8390;">dnepro@gmail.com</div>
<div class="a" style="left:1811px;top:666px;width:4.4px;height:4.4px;border-radius:50%;background:#111"></div>
<div class="a" style="left:1811px;top:672px;width:4.4px;height:4.4px;border-radius:50%;background:#111"></div>
<div class="a" style="left:1811px;top:678px;width:4.4px;height:4.4px;border-radius:50%;background:#111"></div>
<div class="a" style="left:241px;top:720px;width:20px;height:20px;border:1px solid #cfd3da;border-radius:4px;background:#fff"></div>
<svg style="left:295px;top:714px" width="32" height="32" viewBox="0 0 32 32"><defs><clipPath id="cnibulon"><rect width="32" height="32" rx="3"/></clipPath></defs><g clip-path="url(#cnibulon)"><rect width="32" height="32" fill="#fff"/><path d="M5.1 6.6 L15.2 0.4 L25.8 6.6 L15.2 12.9 Z" fill="none" stroke="#3a2c8f" stroke-width="1.2"/><path d="M5.1 10.2 L15.2 16.4 L25.8 10.2 M5.1 13.4 L15.2 19.8 L25.8 13.4" fill="none" stroke="#3a2c8f" stroke-width="1.2"/><path d="M6.5 7 Q12 6.5 13 10 Q12.6 5 15.2 2.8 Q17.8 5 17.4 10 Q18.6 6.5 24.4 7" fill="none" stroke="#2e7d32" stroke-width="1"/><text x="-0.4" y="30.6" font-family="Liberation Sans" font-size="10" fill="#2a7d36" textLength="27" lengthAdjust="spacingAndGlyphs">НІБУЛ</text></g></svg>
<div class="a" style="left:319px;top:738px;width:12px;height:12px;border-radius:50%;background:#1e90f5;border:2px solid #fff"></div>
<div class="t" style="left:343px;top:714.84px;font-size:12px;font-weight:400;color:#374151;;letter-spacing:0.15px">ФОП Нибулон</div>
<div class="t" style="left:343px;top:732.84px;font-size:12px;font-weight:400;color:#7b8390;;letter-spacing:0.15px">Покупатель</div>
<div class="a" style="left:745px;top:718px;width:51px;height:24px;border:2px solid #5e5cf4;border-radius:12px"></div>
<div class="t" style="left:757.5px;top:724.34px;font-size:12px;font-weight:400;color:#5e5cf4;-webkit-text-stroke:0.25px #5e5cf4">tag 1</div>
<div class="a" style="left:806px;top:718px;width:51px;height:24px;border:2px solid #5e5cf4;border-radius:12px"></div>
<div class="t" style="left:818.5px;top:724.34px;font-size:12px;font-weight:400;color:#5e5cf4;-webkit-text-stroke:0.25px #5e5cf4">tag 2</div>
<div class="t" style="left:887px;top:723.84px;font-size:12px;font-weight:400;color:#374151;">Shafynskaia (rec) Anastasya</div>
<div class="t" style="left:1187px;top:714.84px;font-size:12px;font-weight:400;color:#374151;;letter-spacing:0.15px">Антонюк Сергей Ігорович</div>
<div class="t" style="left:1187px;top:732.84px;font-size:12px;font-weight:400;color:#7b8390;;letter-spacing:0.15px">власник</div>
<div class="t" style="left:1487px;top:714.84px;font-size:12px;font-weight:400;color:#374151;">0530780808</div>
<div class="t" style="left:1487px;top:732.84px;font-size:12px;font-weight:400;color:#7b8390;">nibull@gmail.com</div>
<div class="a" style="left:1811px;top:722px;width:4.4px;height:4.4px;border-radius:50%;background:#111"></div>
<div class="a" style="left:1811px;top:728px;width:4.4px;height:4.4px;border-radius:50%;background:#111"></div>
<div class="a" style="left:1811px;top:734px;width:4.4px;height:4.4px;border-radius:50%;background:#111"></div>
<div class="a" style="left:241px;top:776px;width:20px;height:20px;border:1px solid #cfd3da;border-radius:4px;background:#fff"></div>
<svg style="left:295px;top:770px" width="32" height="32" viewBox="0 0 32 32"><defs><clipPath id="ctara"><rect width="32" height="32" rx="3"/></clipPath></defs><g clip-path="url(#ctara)"><rect width="32" height="32" fill="#fff"/><g fill="none" stroke="#de9350" stroke-width="1.1" stroke-linejoin="round"><path d="M4.8 10.2 L15.6 5.6 L26.6 10.2 L15.2 15.6 Z"/><path d="M4.8 10.2 V13 L11.8 16.6 V19.6 L26.6 12.8 V10.2"/><path d="M11.8 16.6 L15.2 15.6 M8 8.8 L19 13.8 M11.2 7.4 L22.6 12.2"/></g><text x="5" y="25.6" font-family="Liberation Sans" font-size="4.6" font-weight="700" fill="#222" textLength="21.6" lengthAdjust="spacingAndGlyphs">ТАРА ТРЕЙД</text></g></svg>
<div class="a" style="left:319px;top:794px;width:12px;height:12px;border-radius:50%;background:#6461f2;border:2px solid #fff"></div>
<div class="t" style="left:343px;top:770.84px;font-size:12px;font-weight:400;color:#374151;;letter-spacing:0.15px">ФОП Тара Трейд</div>
<div class="t" style="left:343px;top:788.84px;font-size:12px;font-weight:400;color:#7b8390;;letter-spacing:0.15px">Покупатель</div>
<div class="a" style="left:745px;top:774px;width:51px;height:24px;border:2px solid #5e5cf4;border-radius:12px"></div>
<div class="t" style="left:757.5px;top:780.34px;font-size:12px;font-weight:400;color:#5e5cf4;-webkit-text-stroke:0.25px #5e5cf4">tag 1</div>
<div class="a" style="left:806px;top:774px;width:51px;height:24px;border:2px solid #5e5cf4;border-radius:12px"></div>
<div class="t" style="left:818.5px;top:780.34px;font-size:12px;font-weight:400;color:#5e5cf4;-webkit-text-stroke:0.25px #5e5cf4">tag 2</div>
<div class="t" style="left:887px;top:779.84px;font-size:12px;font-weight:400;color:#374151;">Shafynskaia (rec) Anastasya</div>
<div class="t" style="left:1187px;top:770.84px;font-size:12px;font-weight:400;color:#374151;;letter-spacing:0.15px">Малюта Олександер Іванович</div>
<div class="t" style="left:1187px;top:788.84px;font-size:12px;font-weight:400;color:#7b8390;;letter-spacing:0.15px">власник</div>
<div class="t" style="left:1487px;top:770.84px;font-size:12px;font-weight:400;color:#374151;">0689080888</div>
<div class="t" style="left:1487px;top:788.84px;font-size:12px;font-weight:400;color:#7b8390;">tartrend@gmail.com</div>
<div class="a" style="left:1811px;top:778px;width:4.4px;height:4.4px;border-radius:50%;background:#111"></div>
<div class="a" style="left:1811px;top:784px;width:4.4px;height:4.4px;border-radius:50%;background:#111"></div>
<div class="a" style="left:1811px;top:790px;width:4.4px;height:4.4px;border-radius:50%;background:#111"></div>
<div class="a" style="left:241px;top:832px;width:20px;height:20px;border:1px solid #cfd3da;border-radius:4px;background:#fff"></div>
<svg style="left:295px;top:826px" width="32" height="32" viewBox="0 0 32 32"><defs><clipPath id="chpg"><rect width="32" height="32" rx="3"/></clipPath></defs><g clip-path="url(#chpg)"><rect width="32" height="32" fill="#fff"/><path d="M0 15.9 H5.5 M26.6 19.1 H32" stroke="#d3262a" stroke-width="1.2"/><path d="M0 19.1 H7.6 M27 15.9 H32" stroke="#111" stroke-width="1.2"/><circle cx="16.1" cy="10.8" r="9.3" fill="none" stroke="#151515" stroke-width="3.4"/><circle cx="16.1" cy="10.8" r="9.3" fill="none" stroke="#ddd" stroke-width="0.7" stroke-dasharray="0.6 1.6"/><path d="M10.6 10 Q12 4 18 5 Q22.5 6 20.5 9 Q17 6.5 13.5 9.5 Z" fill="#d3262a"/><path d="M13 14.5 Q10 12 12 8.5 L14 9 Q13 12 15 14.6 Z" fill="#9c9c9c"/><path d="M15.5 15 Q21.5 15.5 21.6 9.6 Q19.5 12.5 16.3 12.6 Z" fill="#111"/><text x="1.2" y="31.2" font-family="Liberation Sans" font-size="9.4" font-weight="700" fill="#111" textLength="25" lengthAdjust="spacingAndGlyphs">ХПГ</text></g></svg>
<div class="a" style="left:319px;top:850px;width:12px;height:12px;border-radius:50%;background:#22a33a;border:2px solid #fff"></div>
<div class="t" style="left:343px;top:826.84px;font-size:12px;font-weight:400;color:#374151;;letter-spacing:0.15px">ФОП ТЕХпром</div>
<div class="t" style="left:343px;top:844.84px;font-size:12px;font-weight:400;color:#7b8390;;letter-spacing:0.15px">Покупатель</div>
<div class="a" style="left:745px;top:830px;width:51px;height:24px;border:2px solid #5e5cf4;border-radius:12px"></div>
<div class="t" style="left:757.5px;top:836.34px;font-size:12px;font-weight:400;color:#5e5cf4;-webkit-text-stroke:0.25px #5e5cf4">tag 1</div>
<div class="a" style="left:806px;top:830px;width:51px;height:24px;border:2px solid #5e5cf4;border-radius:12px"></div>
<div class="t" style="left:818.5px;top:836.34px;font-size:12px;font-weight:400;color:#5e5cf4;-webkit-text-stroke:0.25px #5e5cf4">tag 2</div>
<div class="t" style="left:887px;top:835.84px;font-size:12px;font-weight:400;color:#374151;">Shafynskaia (rec) Anastasya</div>
<div class="t" style="left:1187px;top:826.84px;font-size:12px;font-weight:400;color:#374151;;letter-spacing:0.15px">Коц Сергій Анатолівич</div>
<div class="t" style="left:1187px;top:844.84px;font-size:12px;font-weight:400;color:#7b8390;;letter-spacing:0.15px">директор</div>
<div class="t" style="left:1487px;top:826.84px;font-size:12px;font-weight:400;color:#374151;">0689090508</div>
<div class="t" style="left:1487px;top:844.84px;font-size:12px;font-weight:400;color:#7b8390;">teproom@gmail.com</div>
<div class="a" style="left:1811px;top:834px;width:4.4px;height:4.4px;border-radius:50%;background:#111"></div>
<div class="a" style="left:1811px;top:840px;width:4.4px;height:4.4px;border-radius:50%;background:#111"></div>
<div class="a" style="left:1811px;top:846px;width:4.4px;height:4.4px;border-radius:50%;background:#111"></div>
<div class="a" style="left:239px;top:896px;width:42px;height:40px;background:#e5e7eb;border-radius:7px"></div><svg style="left:239px;top:896px" width="42" height="40" viewBox="0 0 42 40" fill="none" stroke="#8d96a2" stroke-width="1.4" stroke-linecap="round" stroke-linejoin="round"><path d="M20 14.5 L14.5 20 L20 25.5 M27.5 14.5 L22 20 L27.5 25.5"/></svg>
<div class="a" style="left:289px;top:896px;width:42px;height:40px;background:#e5e7eb;border-radius:7px"></div><svg style="left:289px;top:896px" width="42" height="40" viewBox="0 0 42 40" fill="none" stroke="#8d96a2" stroke-width="1.4" stroke-linecap="round" stroke-linejoin="round"><path d="M23.5 14.5 L18 20 L23.5 25.5"/></svg>
<div class="a" style="left:403px;top:896px;width:42px;height:40px;background:#e5e7eb;border-radius:7px"></div><svg style="left:403px;top:896px" width="42" height="40" viewBox="0 0 42 40" fill="none" stroke="#8d96a2" stroke-width="1.4" stroke-linecap="round" stroke-linejoin="round"><path d="M18.5 14.5 L24 20 L18.5 25.5"/></svg>
<div class="a" style="left:453px;top:896px;width:42px;height:40px;background:#e5e7eb;border-radius:7px"></div><svg style="left:453px;top:896px" width="42" height="40" viewBox="0 0 42 40" fill="none" stroke="#8d96a2" stroke-width="1.4" stroke-linecap="round" stroke-linejoin="round"><path d="M14.5 14.5 L20 20 L14.5 25.5 M22 14.5 L27.5 20 L22 25.5"/></svg>
<div class="t" style="left:339.5px;top:909.34px;font-size:12px;font-weight:400;color:#4b5563;letter-spacing:-0.03px">1-12 из 12</div>
<div class="t" style="left:511px;top:909.84px;font-size:12px;font-weight:400;color:#4b5563;letter-spacing:0.05px">Строк на странице</div>
<div class="a" style="left:633px;top:896px;width:130px;height:40px;border:1px solid #cfd3da;border-radius:4px"></div>
<div class="t" style="left:650px;top:909.15px;font-size:14px;font-weight:400;color:#374151;">20</div>
<svg style="left:737px;top:913px" width="13" height="8" viewBox="0 0 13 8" fill="none" stroke="#374151" stroke-width="1.6" stroke-linecap="round" stroke-linejoin="round"><path d="M1 1 L6.5 7 L12 1"/></svg>
<div class="a" style="left:1797px;top:894px;width:40px;height:40px;border-radius:50%;background:#6461f2"></div>
<svg style="left:1797px;top:894px" width="40" height="40" viewBox="0 0 40 40" stroke="#fff" stroke-width="2"><path d="M20 11.5 V28.5 M11.5 20 H28.5"/></svg>
<div class="t" style="left:1820px;top:940.23px;font-size:8px;font-weight:400;color:#b9bec6;">0.1.1257</div>
<svg style="left:0;top:0" width="1855" height="944" viewBox="0 0 1855 944"><path d="M161.5 140.5 L139.2 119.85" stroke="#ff0000" stroke-width="3.2" stroke-linecap="round"/><path d="M124.8 107 L135.4 124.3 L143 115.4 Z" fill="#ff0000"/></svg>
<svg style="left:0;top:0" width="1855" height="944" viewBox="0 0 1855 944"><path d="M180 63 L201.9 51.7" stroke="#ff0000" stroke-width="3.2" stroke-linecap="round"/><path d="M218.9 42.75 L199.3 46.7 L204.5 56.7 Z" fill="#ff0000"/></svg>
<svg style="left:0;top:0" width="1855" height="944" viewBox="0 0 1855 944"><path d="M494 178 L473.35 202.60000000000002" stroke="#ff0000" stroke-width="3.2" stroke-linecap="round"/><path d="M460.4 217.5 L468.9 198.9 L477.8 206.3 Z" fill="#ff0000"/></svg>
<svg style="left:0;top:0" width="1855" height="944" viewBox="0 0 1855 944" fill="none" stroke="#ff0000" stroke-width="1.3" stroke-linejoin="round"><path d="M169 155 L172.6 152.4 V164.6 M168.6 164.6 H176.2"/><path d="M172.4 77.8 Q173.4 75.3 176.1 75.3 Q179.6 75.3 179.6 78.7 Q179.6 80.6 177.2 83 L172.4 87.7 H180.2"/><path d="M500.2 172.8 Q501.6 171.3 503.9 171.3 Q507.5 171.3 507.5 174.5 Q507.5 177.3 503.4 177.3 Q508.2 177.3 508.2 180.7 Q508.2 184 503.9 184 Q501.2 184 499.8 182.4"/></svg>
</div></body></html>
